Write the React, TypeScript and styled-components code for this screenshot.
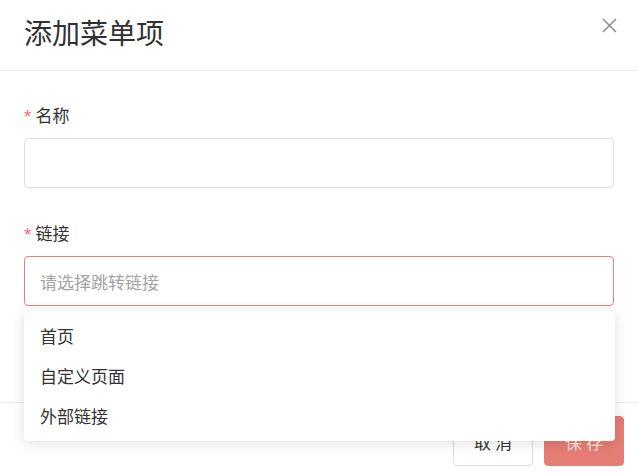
import { useState } from 'react';
import styled, { createGlobalStyle } from 'styled-components';

const GlobalStyle = createGlobalStyle`
  html, body {
    margin: 0;
    padding: 0;
    background: #ffffff;
  }
  body {
    font-family: 'Noto Sans CJK SC', 'Noto Sans', sans-serif;
    color: #303133;
  }
  * {
    box-sizing: border-box;
  }
`;

const linkOptions = ['首页', '自定义页面', '外部链接'];

const App = () => {
  const [name, setName] = useState('');
  const [open] = useState(true);

  return (
    <>
      <GlobalStyle />
      <Dialog>
        <Header>
          <Title>添加菜单项</Title>
          <CloseButton aria-label="close">
            <svg width="15" height="15" viewBox="0 0 15 15">
              <path d="M1 1 L14 14 M14 1 L1 14" stroke="#8c8c8c" strokeWidth="1.5" fill="none" />
            </svg>
          </CloseButton>
        </Header>
        <Body>
          <Field>
            <Label>
              <Required>*</Required>名称
            </Label>
            <TextInput value={name} onChange={(e) => setName(e.target.value)} />
          </Field>
          <Field>
            <Label>
              <Required>*</Required>链接
            </Label>
            <SelectBox $error>
              <Placeholder>请选择跳转链接</Placeholder>
            </SelectBox>
            {open && (
              <Dropdown>
                {linkOptions.map((item) => (
                  <Option key={item}>{item}</Option>
                ))}
              </Dropdown>
            )}
          </Field>
        </Body>
        <Footer>
          <Button>取 消</Button>
          <Button $primary>保 存</Button>
        </Footer>
      </Dialog>
    </>
  );
};

export default App;

const Dialog = styled.div`
  width: 638px;
  height: 473px;
  overflow: hidden;
  background: #ffffff;
`;

const Header = styled.div`
  height: 71px;
  display: flex;
  align-items: flex-start;
  justify-content: space-between;
  padding: 12px 21px 0 24px;
  border-bottom: 1px solid #ebebeb;
`;

const Title = styled.div`
  font-size: 28px;
  line-height: 40px;
  color: #303133;
`;

const CloseButton = styled.div`
  width: 15px;
  height: 15px;
  margin-top: 6px;
  display: flex;
  cursor: pointer;
`;

const Body = styled.div`
  padding: 31px 24px 96px;
`;

const Field = styled.div`
  position: relative;
  & + & {
    margin-top: 32px;
  }
`;

const Label = styled.div`
  display: flex;
  align-items: center;
  height: 24px;
  margin-bottom: 12px;
  font-size: 17px;
  color: #333333;
`;

const Required = styled.span`
  color: #f56c6c;
  font-size: 19px;
  line-height: 1;
  margin: 5px 4px 0 0;
  font-family: 'Liberation Sans', sans-serif;
`;

const TextInput = styled.input`
  display: block;
  width: 100%;
  height: 50px;
  padding: 0 15px;
  border: 1px solid #dcdfe6;
  border-radius: 4px;
  font-size: 17px;
  font-family: inherit;
  outline: none;
`;

const SelectBox = styled.div<{ $error?: boolean }>`
  height: 50px;
  display: flex;
  align-items: center;
  padding: 0 15px;
  border: 1px solid ${({ $error }) => ($error ? '#e8837a' : '#dcdfe6')};
  border-radius: 4px;
  background: #ffffff;
  cursor: pointer;
`;

const Placeholder = styled.span`
  font-size: 17px;
  color: #a3a3a3;
`;

const Dropdown = styled.ul`
  position: absolute;
  top: 91px;
  left: 0;
  right: -1px;
  margin: 0;
  padding: 5px 0;
  list-style: none;
  background: #ffffff;
  border-radius: 4px;
  box-shadow: 0 2px 14px rgba(0, 0, 0, 0.13);
  z-index: 10;
`;

const Option = styled.li`
  height: 40px;
  line-height: 40px;
  padding: 0 16px;
  font-size: 17px;
  color: #333333;
  cursor: pointer;
`;

const Footer = styled.div`
  display: flex;
  justify-content: flex-end;
  gap: 11px;
  padding: 13px 14px 0;
  border-top: 1px solid #ebebeb;
`;

const Button = styled.button<{ $primary?: boolean }>`
  width: 80px;
  height: 50px;
  border-radius: 4px;
  font-size: 17px;
  font-family: inherit;
  cursor: pointer;
  border: 1px solid ${({ $primary }) => ($primary ? '#e57d74' : '#dcdfe6')};
  background: ${({ $primary }) => ($primary ? '#e57d74' : '#ffffff')};
  color: ${({ $primary }) => ($primary ? 'rgba(255, 255, 255, 0.8)' : '#333333')};
`;
